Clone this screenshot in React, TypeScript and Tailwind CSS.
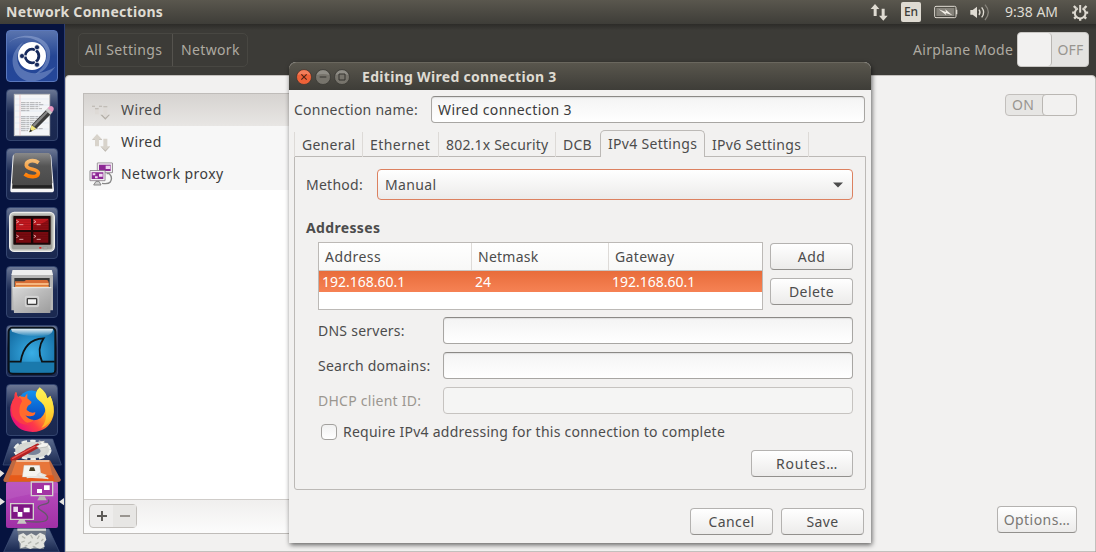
import type { ReactNode } from "react";

function Tile({ children, blue = false }: { children: ReactNode; blue?: boolean }) {
  return (
    <div
      className={`relative h-[52px] w-[52px] overflow-hidden rounded-[4px] border ${
        blue ? "border-[#5a78bd] bg-linear-to-b from-[#5a74ae] via-[#254694] to-[#25479a]" : "border-[#34456f] bg-linear-to-b from-[#6b7794] via-[#1d2b55] via-45% to-[#1a2850]"
      }`}
    >
      <svg viewBox="3 3 150 150" className="h-full w-full">
        {children}
      </svg>
    </div>
  );
}

function DashIcon() {
  return (
    <>
      <path d="M8 38 C40 5 120 10 132 62 C136 100 120 125 88 132 C120 110 128 80 118 58 C100 20 40 12 8 38Z" fill="#b9c9ea" opacity=".38" />
      <path d="M60 152 C25 140 12 100 24 70 C30 58 38 45 52 36 C30 65 28 96 45 115 C75 140 115 130 148 110 C120 150 90 158 60 152Z" fill="#b9c9ea" opacity=".34" />
      <circle cx="78" cy="78" r="42" fill="#fff" />
      <circle cx="78" cy="78" r="20.5" fill="none" stroke="#15295c" strokeWidth="8.5" strokeDasharray="39.4 3.5" strokeDashoffset="-23" />
      <circle cx="48" cy="78" r="7.5" fill="#15295c" stroke="#fff" strokeWidth="2" />
      <circle cx="93" cy="52" r="7.5" fill="#15295c" stroke="#fff" strokeWidth="2" />
      <circle cx="93" cy="104" r="7.5" fill="#15295c" stroke="#fff" strokeWidth="2" />
    </>
  );
}

function EditorIcon() {
  return (
    <>
      <rect x="25" y="16" width="106" height="124" fill="#f4f5f7" stroke="#c3c3c3" strokeWidth="3" />
      <path d="M42 17V139" stroke="#eca6a6" strokeWidth="1.5" />
      <path d="M27 30H130M27 48H130M27 66H130M27 84H130M27 102H130M27 120H130" stroke="#ccdcf0" strokeWidth="1.2" />
      <path d="M45 41H104M45 47H112M45 53H100M45 59H108M45 65H70M45 83H106M45 89H98M45 95H90M45 101H82M45 107H76M45 113H70M45 119H110M45 125H66" stroke="#8f9092" strokeWidth="2" strokeDasharray="14 2 9 2" />
      <path d="M70 130L77 108L121 62L135 75L91 119Z" fill="#3b3b3b" />
      <path d="M80 108L122 65L127 69L85 113Z" fill="#868686" />
      <path d="M70 130L77 108L91 119Z" fill="#f1e57c" />
      <path d="M70 130L73 121L79 126Z" fill="#222" />
      <path d="M119 64L126 56L140 69L133 77Z" fill="#c9cac8" />
      <path d="M125 57Q134 46 142 55Q146 62 138 70Z" fill="#e797c0" />
    </>
  );
}

function SublimeIcon() {
  return (
    <>
      <defs>
        <linearGradient id="keytop" x1="0" y1="0" x2="0" y2="1">
          <stop offset="0" stopColor="#8a8a8a" />
          <stop offset=".4" stopColor="#555" />
          <stop offset="1" stopColor="#4a4a4a" />
        </linearGradient>
        <linearGradient id="orange" x1="0" y1="0" x2="0" y2="1">
          <stop offset="0" stopColor="#f4bd76" />
          <stop offset="1" stopColor="#ff7b00" />
        </linearGradient>
      </defs>
      <path d="M20 26Q21 18 30 17H126Q135 18 136 26L144 126Q144 133 136 133H20Q12 133 13 126Z" fill="#f6f6f6" />
      <path d="M27 25H130L139 122H18Z" fill="#3a3a3a" />
      <path d="M29 15H127Q133 16 134 23L139 103Q139 111 132 112H25Q18 111 18 103L23 22Q24 16 29 15Z" fill="url(#keytop)" />
      <path d="M20 112H138L137 119H21Z" fill="#222" />
      <path d="M98 44C82 33 60 38 61 52C62 66 96 62 97 75C97 90 68 88 56 78" fill="none" stroke="url(#orange)" strokeWidth="11" />
    </>
  );
}

function TerminatorIcon() {
  return (
    <>
      <rect x="11" y="16" width="134" height="117" rx="14" fill="#c7c8c2" stroke="#eeeeeb" strokeWidth="4" />
      <rect x="17" y="23" width="122" height="104" rx="8" fill="#9fa09a" />
      <rect x="22" y="27" width="112" height="86" rx="2" fill="#1b0808" />
      <path d="M30 35H75V69H30ZM82 35H127V69H82Z" fill="#c51a20" />
      <path d="M30 75H75V107H30ZM82 75H127V107H82Z" fill="#780b10" />
      <path d="M82 69V55Q108 52 127 38V69Z" fill="#8e0e14" />
      <path d="M30 42H75M30 49H75M30 56H75M30 63H75M82 42H127M82 49H127M82 56H127M82 63H127M30 82H75M30 89H75M30 96H75M82 82H127M82 89H127M82 96H127" stroke="#480409" strokeWidth="1" opacity=".7" />
      <path d="M31 40L38 44L31 48M40 53H52M83 40L90 44L83 48M92 53H104M31 84L38 88L31 92M40 97H52M83 84L90 88L83 92M92 97H104" fill="none" stroke="#f1b9b9" strokeWidth="2.5" />
      <rect x="100" y="120" width="6" height="5" fill="#e02020" />
      <rect x="111" y="119" width="14" height="7" rx="2" fill="#a6a7a2" stroke="#85867f" />
    </>
  );
}

function FilesIcon() {
  return (
    <>
      <defs>
        <linearGradient id="drawer" x1="0" y1="0" x2="1" y2="1">
          <stop offset="0" stopColor="#d9d9d9" />
          <stop offset=".5" stopColor="#b9b9b9" />
          <stop offset="1" stopColor="#9c9c9c" />
        </linearGradient>
      </defs>
      <path d="M20 12H138L141 32V133H16V32Z" fill="#b6b6b6" />
      <path d="M20 12H137L141 27H16Z" fill="#eeeeee" />
      <path d="M25 36H131V66H25Z" fill="#383838" />
      <path d="M27 46H55L60 42H124L128 48V68H27Z" fill="#d86d35" />
      <path d="M30 54H128" stroke="#ffd09a" strokeWidth="5" />
      <path d="M28 59H128V67H28Z" fill="#eb9a52" />
      <path d="M20 64H136L133 141H24Z" fill="url(#drawer)" />
      <path d="M20 65H136" stroke="#ededed" strokeWidth="3" />
      <rect x="58" y="91" width="40" height="31" rx="4" fill="#cbcbcb" stroke="#e0e0e0" strokeWidth="2" />
      <rect x="64" y="98" width="28" height="17" rx="2" fill="#f3f3f3" stroke="#3e3e3e" strokeWidth="4" />
    </>
  );
}

function WiresharkIcon() {
  return (
    <>
      <defs>
        <radialGradient id="sea" cx=".5" cy=".55" r=".6">
          <stop offset="0" stopColor="#39aee6" />
          <stop offset="1" stopColor="#1670a7" />
        </radialGradient>
        <linearGradient id="gloss" x1="0" y1="0" x2="0" y2="1">
          <stop offset="0" stopColor="#fff" stopOpacity=".9" />
          <stop offset="1" stopColor="#fff" stopOpacity="0" />
        </linearGradient>
      </defs>
      <rect x="8" y="8" width="140" height="138" rx="12" fill="url(#sea)" stroke="#0a1119" strokeWidth="6" />
      <path d="M12 110H144V142H12Z" fill="#1a79ac" />
      <path d="M15 11H141Q141 28 120 32Q70 40 18 20Z" fill="url(#gloss)" />
      <path d="M10 110H44C50 70 70 42 113 40C98 62 98 88 108 110H146" fill="none" stroke="#0c1216" strokeWidth="5.5" />
    </>
  );
}

function FirefoxIcon() {
  return (
    <>
      <defs>
        <linearGradient id="fire" x1="1" y1=".1" x2=".1" y2=".8">
          <stop offset="0" stopColor="#fff44f" />
          <stop offset=".4" stopColor="#ffa41f" />
          <stop offset=".7" stopColor="#ff3b47" />
          <stop offset="1" stopColor="#e9107a" />
        </linearGradient>
        <linearGradient id="globe" x1="0" y1="0" x2="0" y2="1">
          <stop offset="0" stopColor="#1191ef" />
          <stop offset="1" stopColor="#0646bd" />
        </linearGradient>
        <linearGradient id="flame" x1="0" y1="0" x2="0" y2="1">
          <stop offset="0" stopColor="#fff25a" />
          <stop offset=".5" stopColor="#ffdd38" />
          <stop offset="1" stopColor="#ffad22" />
        </linearGradient>
      </defs>
      <path d="M30 23L35 40Q48 30 80 32L120 50L133 35Q148 70 142 96Q128 143 80 144Q28 143 14 94Q8 64 26 40Q24 29 30 23Z" fill="url(#fire)" />
      <path d="M44 35Q60 18 82 20Q98 22 108 35L118 62Q122 86 104 102Q86 114 66 105L48 80Z" fill="url(#globe)" />
      <path d="M30 23L35 40Q48 36 56 39L64 28V43L77 54Q76 61 66 65Q61 72 62 78Q76 90 88 84Q88 96 76 96Q66 98 58 94Q66 106 84 108Q70 122 46 112L20 72Q20 55 30 38Z" fill="#ff6a2c" />
      <path d="M30 23L35 40Q46 40 48 52Q36 72 42 94Q54 114 70 122Q38 124 20 96Q10 66 26 40Q24 29 30 23Z" fill="#fb3a47" />
      <path d="M101 10Q121 25 124 43L133 36Q146 60 141 94Q130 124 106 132Q124 110 119 80Q114 58 100 50Q86 40 90 27Q93 17 101 10Z" fill="url(#flame)" />
    </>
  );
}

function FoldedIcons() {
  return (
    <svg viewBox="0 189 195 342" className="block h-[114px] w-[65px]">
      <defs>
        <linearGradient id="purple" x1="0" y1="0" x2="0" y2="1">
          <stop offset="0" stopColor="#b94fc0" />
          <stop offset="1" stopColor="#a030a5" />
        </linearGradient>
        <linearGradient id="fold" x1="0" y1="0" x2="0" y2="1">
          <stop offset="0" stopColor="#5b6b8e" />
          <stop offset="1" stopColor="#17264f" />
        </linearGradient>
      </defs>
      <path d="M34 192H158L184 270H9Z" fill="url(#fold)" stroke="#44557b" strokeWidth="2" />
      <ellipse cx="97" cy="225" rx="51" ry="24" fill="#d9dad6" stroke="#eceeea" strokeWidth="13" strokeDasharray="16 9" />
      <ellipse cx="97" cy="225" rx="46" ry="20" fill="none" stroke="#d5d7d3" strokeWidth="9" />
      <ellipse cx="98" cy="228" rx="24" ry="12" fill="#788399" />
      <path d="M38 253L112 213" stroke="#b32121" strokeWidth="14" strokeLinecap="round" />
      <path d="M38 250L105 214" stroke="#e65450" strokeWidth="4" strokeLinecap="round" />
      <path d="M108 214L124 206L117 200L134 197L131 203L144 204Q148 214 136 216L117 219Z" fill="#f4f4f0" stroke="#777" strokeWidth="1" />
      <path d="M37 256H150L183 315Q181 321 174 321H18Q10 321 10 314Z" fill="#bd6942" />
      <path d="M49 256H146L160 312H29Z" fill="#e8763a" />
      <path d="M49 258H148" stroke="#f6d4b7" strokeWidth="5" />
      <path d="M31 301H160L164 319H25Z" fill="#e65a19" />
      <path d="M72 271H119L124 306H67Z" fill="#f5f4ef" stroke="#bbb" />
      <path d="M87 288L91 277H102L106 288Z" fill="#484125" />
      <path d="M119 294L137 301L130 307L112 300ZM125 303L145 311M80 308Q116 302 145 311" fill="#eee" stroke="#e3e2dd" strokeWidth="4" />
      <rect x="18" y="321" width="156" height="138" rx="6" fill="url(#purple)" />
      <path d="M18 321H174V354Q100 350 18 375Z" fill="#c16ac7" opacity=".35" />
      <path d="M94 321H158V362H94Z" fill="#a334a4" stroke="#d3d2cd" strokeWidth="4" />
      <path d="M132 331H149V345H132ZM111 342H126V354H111Z" fill="#fff" />
      <path d="M118 364H134L140 376H112Z" fill="#b8b6b1" />
      <path d="M32 386H100V433H32Z" fill="#7f1584" stroke="#d3d2cd" strokeWidth="4" />
      <path d="M71 398H89V412H71ZM53 411H67V425H53Z" fill="#fff" />
      <path d="M40 395H54V411H40Z" fill="#ead8eb" />
      <path d="M57 435H74L80 446H51Z" fill="#c8c6c2" />
      <path d="M145 374Q151 386 131 388Q102 395 124 407Q151 423 139 436Q128 444 77 439" fill="none" stroke="#66576b" strokeWidth="4" />
      <path d="M42 462H147L178 531H11Z" fill="url(#fold)" stroke="#44557b" strokeWidth="2" />
      <path d="M52 463H139L132 522H59Z" fill="#6d7684" />
      <path d="M52 464H138" stroke="#d3d5d1" strokeWidth="7" />
      <path d="M56 480L70 474L80 482L94 475L108 482L120 473L135 480L139 494L131 505L134 515L120 521L104 517L91 522L76 516L61 520L62 506L54 495Z" fill="#e3e4df" />
      <path d="M66 484L76 490M92 480L98 490M118 482L112 492M64 502L74 498M84 506L94 500M106 508L116 502M124 498L130 492M74 514L82 511M98 514L106 516" fill="none" stroke="#b4b7b0" strokeWidth="4" />
      <path d="M0 285L13 295L0 307ZM0 369L15 380L0 391ZM192 369L177 380L192 391Z" fill="#e4e2df" />
    </svg>
  );
}

function Launcher() {
  return (
    <nav className="flex w-[65px] shrink-0 flex-col border-r border-[#2b3d72] bg-[#06133f]">
      <div className="flex flex-col gap-[7px] pt-[6px] pb-[2px] pl-[6px]">
        <Tile blue><DashIcon /></Tile>
        <Tile><EditorIcon /></Tile>
        <Tile><SublimeIcon /></Tile>
        <Tile><TerminatorIcon /></Tile>
        <Tile><FilesIcon /></Tile>
        <Tile><WiresharkIcon /></Tile>
        <Tile><FirefoxIcon /></Tile>
      </div>
      <FoldedIcons />
    </nav>
  );
}

function TopBar() {
  return (
    <header className="flex h-6 shrink-0 items-center bg-linear-to-b from-[#5a574e] to-[#3e3d38] text-[#dfdbd2]">
      <h1 className="pl-[6px] text-[14px] font-bold tracking-[0.28px]">Network Connections</h1>
      <svg viewBox="60 0 54 72" className="ml-auto h-6 w-[18px]" fill="#dfdbd2">
        <path d="M75 12L88 27H80V48H71V27H62ZM100 62L87 47H95V26H104V47H113Z" />
      </svg>
      <div className="ml-[13px] flex h-5 w-5 items-center justify-center rounded-[2px] bg-[#dfdbd2] text-[12px] font-medium tracking-[-0.2px] text-[#3c3b37]">En</div>
      <svg viewBox="252 0 72 72" className="ml-[13px] h-6 w-6">
        <rect x="254" y="19" width="64" height="34" rx="4" fill="none" stroke="#dfdbd2" strokeWidth="3" />
        <rect x="259" y="24" width="54" height="24" fill="#85827a" />
        <path d="M320 29V43" stroke="#dfdbd2" strokeWidth="4" />
        <path d="M266 28L288 36L286 28L307 46L287 39L289 46Z" fill="#f2eee6" />
      </svg>
      <svg viewBox="359 0 60 72" className="ml-3 h-6 w-5" fill="none" stroke="#dfdbd2" strokeWidth="4">
        <path d="M360 30H367L380 20V54L367 44H360Z" fill="#dfdbd2" stroke="none" />
        <path d="M386 29Q392 37 386 45" />
        <path d="M394 22Q406 37 394 52" />
        <path d="M404 14Q424 37 404 60" stroke="#85827a" />
      </svg>
      <time className="ml-[15px] w-[54px] text-[14px] tracking-[0px] whitespace-nowrap">9:38 AM</time>
      <svg viewBox="666 0 50 72" className="mr-[7px] ml-[13px] h-6 w-[17px]" fill="none" stroke="#dfdbd2">
        <path d="M683 25A16 16 0 1 0 697 25" strokeWidth="6" />
        <path d="M690 15V38" strokeWidth="6" />
        <path d="M671 18L678 25M709 18L702 25M666 38H674M706 38H714M672 56L678 50M708 56L702 50M690 54V62" strokeWidth="7" />
      </svg>
    </header>
  );
}

function WiredIcon({ partial = false }: { partial?: boolean }) {
  return (
    <svg viewBox="0 0 54 57" className="h-[19px] w-[18px]" fill="#d8d3cb">
      {partial ? (
        <>
          <path d="M9 22H20V40H9ZM34 20H46V42H34Z" fill="#dedad6" />
          <path d="M0 14H9V17H0ZM21 14H30V17H21ZM9 22H20V25H9ZM34 16H46V19H34Z" fill="#b9b4ad" />
          <path d="M25 41H31L40 50L49 41H54L40 56Z" fill="#b5b0a9" />
          <path d="M32 41H48L40 49Z" fill="#dedad6" />
        </>
      ) : (
        <>
          <path d="M15 3L30 19H21V40H9V19H1Z" />
          <path d="M40 56L25 40H34V17H46V40H55Z" />
          <path d="M1 19H9V21H1ZM21 19H30V21H21ZM25 40L40 56L54 40L40 52Z" fill="#bfbab3" />
        </>
      )}
    </svg>
  );
}

function ProxyIcon() {
  return (
    <svg viewBox="0 0 72 72" className="h-6 w-6">
      <path d="M25 3H70V32H25Z" fill="#8d2795" stroke="#8c8c8c" strokeWidth="3" />
      <path d="M28 6H67V29H28Z" fill="none" stroke="#ededed" strokeWidth="4" />
      <path d="M50 11H64V21H50Z" fill="#ecd0ee" />
      <path d="M53 35H61Q72 46 64 60Q58 67 39 64" fill="none" stroke="#888" strokeWidth="4" />
      <path d="M3 26H48V56H3Z" fill="#8d2795" stroke="#8c8c8c" strokeWidth="3" />
      <path d="M6 29H45V53H6Z" fill="none" stroke="#ededed" strokeWidth="4" />
      <path d="M11 34H19V40H11ZM30 35H41V44H30ZM18 43H26V49H18Z" fill="#f0d9f1" />
      <path d="M21 58H30L36 69H14Z" fill="#d0d0d0" stroke="#858585" strokeWidth="3" />
    </svg>
  );
}

function Button({ children, className }: { children: ReactNode; className: string }) {
  return (
    <button
      className={`flex h-[27px] shrink-0 items-center justify-center rounded-[4px] border border-[#b4b2b0] border-b-[#92908d] bg-linear-to-b from-white to-[#ecebea] whitespace-nowrap ${className}`}
    >
      {children}
    </button>
  );
}

function Entry({ value, className, disabled = false }: { value?: string; className: string; disabled?: boolean }) {
  return (
    <div
      className={`flex h-[27px] shrink-0 items-center rounded-[4px] border pl-[6px] ${
        disabled
          ? "border-[#c6c3c0] bg-[#f5f5f4]"
          : "border-[#a8a6a3] border-t-[#8b8986] bg-linear-to-b from-[#f4f4f4] to-white shadow-[inset_0_1px_1px_rgba(0,0,0,0.08)]"
      } ${className}`}
    >
      {value}
    </div>
  );
}

function SettingsWindow() {
  return (
    <main className="flex min-w-0 flex-1 flex-col bg-[#3c3b37]">
      <div className="flex h-[51px] shrink-0 items-center bg-linear-to-b from-[#2c2b28] to-[#3c3b37] to-12% text-[#aeaaa1]">
        <div className="ml-[13px] flex h-[34px] rounded-[5px] border border-[#484742]">
          <span className="flex w-[94px] items-center border-r border-[#55534e] pl-[6px] tracking-[0.35px] whitespace-nowrap">All Settings</span>
          <span className="flex w-[74px] items-center pl-2 tracking-[0.35px]">Network</span>
        </div>
        <span className="ml-auto w-[104px] tracking-[0.3px] whitespace-nowrap">Airplane Mode</span>
        <div className="mr-[7px] flex h-[35px] w-[72px] rounded-[4px] border border-[#c9c7c4] bg-[#e4e3e1]">
          <span className="w-[34px] rounded-[4px] border-r border-[#b9b6b2] bg-[#f2f1f0]" />
          <span className="flex flex-1 items-center justify-center pl-px text-[#98958f]">OFF</span>
        </div>
      </div>
      <div className="flex min-h-0 flex-1 rounded-t-[4px] border border-[#c3c0bd] bg-[#f2f1f0] pt-[17px] pr-[18px] pb-[17px] pl-[17px]">
        <section className="flex w-[220px] flex-col border border-[#bfbcb9] bg-white text-[#3c3c3c]">
          <div className="flex h-8 shrink-0 items-center bg-linear-to-b from-[#d6d3d0] to-[#e8e6e4] pl-2 text-[#4c4c4c]">
            <WiredIcon partial />
            <span className="ml-[11px] tracking-[0.4px]">Wired</span>
          </div>
          <div className="flex h-8 shrink-0 items-center bg-[#f7f7f7] pl-2">
            <WiredIcon />
            <span className="ml-[11px] tracking-[0.4px]">Wired</span>
          </div>
          <div className="flex h-8 shrink-0 items-center bg-[#f7f7f7] pl-[5px]">
            <ProxyIcon />
            <span className="ml-2 tracking-[0.45px]">Network proxy</span>
          </div>
          <div className="mt-auto flex h-[34px] items-start border-t border-[#cfccc9] bg-linear-to-b from-[#f0efee] to-[#fcfcfc] pt-1 pl-[5px]">
            <div className="flex h-6 w-12 rounded-[4px] border border-[#c3c0bc] bg-[#eeedec]">
              <span className="flex w-[23px] items-center justify-center">
                <svg viewBox="0 0 10 10" className="h-[10px] w-[10px]"><path d="M4 0H6V4H10V6H6V10H4V6H0V4H4Z" fill="#5e5c59" /></svg>
              </span>
              <span className="flex flex-1 items-center justify-center bg-[#e7e6e4]">
                <svg viewBox="0 0 10 10" className="h-[10px] w-[10px]"><path d="M0 4H10V6H0Z" fill="#999590" /></svg>
              </span>
            </div>
          </div>
        </section>
        <section className="flex flex-1 flex-col items-end justify-between pt-px pb-px">
          <div className="flex h-[22px] w-[72px] rounded-[4px] border border-[#c2bfbc] bg-[#e7e6e4]">
            <span className="flex flex-1 items-center justify-center pr-[2px] text-[#999590]">ON</span>
            <span className="-my-px -mr-px w-[35px] rounded-[4px] border border-[#bab7b3] bg-[#f2f1f0]" />
          </div>
          <Button className="w-[80px] tracking-[0.45px] text-[#797774]">Options…</Button>
        </section>
      </div>
    </main>
  );
}

function WindowControl({ kind }: { kind: "close" | "minimize" | "maximize" }) {
  return (
    <svg viewBox="0 0 48 48" className="h-4 w-4">
      <circle cx="24" cy="24" r="22.5" fill={kind === "close" ? "#ee6238" : "#77746c"} stroke="#34332f" strokeWidth="2" />
      <path d="M5 18Q9 4 24 4Q39 4 43 18Q24 12 5 18Z" fill="#fff" opacity=".18" />
      {kind === "close" && <path d="M16 16L32 32M32 16L16 32" stroke="#4e2417" strokeWidth="3.5" />}
      {kind === "minimize" && <path d="M14 24H34" stroke="#34332f" strokeWidth="3" />}
      {kind === "maximize" && <path d="M15 15H33V33H15Z" fill="none" stroke="#34332f" strokeWidth="3" />}
    </svg>
  );
}

function Tab({ label, className }: { label: string; className: string }) {
  return <div className={`flex h-[25px] items-center border-r border-[#dddad7] pl-[7px] whitespace-nowrap ${className}`}>{label}</div>;
}

function AddressTable() {
  return (
    <div className="h-[68px] w-[445px] shrink-0 border border-[#bcb9b6] bg-white">
      <div className="flex h-7 border-b border-[#c9c6c3] bg-linear-to-b from-white to-[#f8f8f7]">
        <span className="flex w-[153px] items-center border-r border-[#dedbd8] pl-[6px] tracking-[0.45px]">Address</span>
        <span className="flex w-[137px] items-center border-r border-[#dedbd8] pl-[6px]">Netmask</span>
        <span className="flex flex-1 items-center pl-[6px] tracking-[0.4px]">Gateway</span>
      </div>
      <div className="flex h-[21px] items-center bg-linear-to-b from-[#e86c3a] to-[#f68254] tracking-[0px] text-white">
        <span className="w-[153px] pl-[3px]">192.168.60.1</span>
        <span className="w-[137px] pl-[3px]">24</span>
        <span className="pl-[3px]">192.168.60.1</span>
      </div>
    </div>
  );
}

function EditDialog() {
  return (
    <div role="dialog" className="absolute top-[62px] left-[289px] flex h-[481px] w-[582px] flex-col rounded-t-[7px] bg-[#f2f1f0] text-[#4c4c4c] shadow-[1px_2px_5px_rgba(0,0,0,0.6)]">
      <div className="flex h-7 shrink-0 items-center gap-[3px] rounded-t-[7px] border-t border-[#6a675e] bg-linear-to-b from-[#59564d] to-[#3e3d38] pl-[7px] text-[#dfdbd2]">
        <WindowControl kind="close" />
        <WindowControl kind="minimize" />
        <WindowControl kind="maximize" />
        <h2 className="ml-[9px] text-[14px] font-bold tracking-[0.3px]">Editing Wired connection 3</h2>
      </div>
      <div className="flex items-center pt-[6px] pl-[5px]">
        <label className="w-[137px] shrink-0">Connection name:</label>
        <Entry className="w-[434px] tracking-[0.4px] text-[#3c3c3c]" value="Wired connection 3" />
      </div>
      <div className="z-10 mt-[7px] -mb-px ml-[5px] flex h-[27px] shrink-0 items-start">
        <Tab className="mt-[2px] w-[69px] border-l" label="General" />
        <Tab className="mt-[2px] w-[76px] tracking-[0.45px]" label="Ethernet" />
        <Tab className="mt-[2px] w-[117px] tracking-[0.2px]" label="802.1x Security" />
        <Tab className="mt-[2px] w-[44px] border-r-0" label="DCB" />
        <div className="flex h-[27px] w-[105px] items-center rounded-t-[5px] border border-b-0 border-[#bcb9b6] bg-[#f2f1f0] pl-[7px] tracking-[0.3px] whitespace-nowrap">IPv4 Settings</div>
        <Tab className="mt-[2px] w-[104px] tracking-[0.3px]" label="IPv6 Settings" />
      </div>
      <div className="ml-[5px] h-[334px] w-[572px] shrink-0 rounded-b-[3px] border border-[#bcb9b6]">
        <div className="mt-3 flex items-center pl-[11px]">
          <label className="w-[71px]">Method:</label>
          <div className="flex h-[31px] w-[476px] items-center justify-between rounded-[4px] border border-[#dc8160] bg-linear-to-b from-white to-[#ecebea] pr-[9px] pl-[7px] tracking-[0.35px]">
            Manual
            <svg viewBox="0 0 10 6" className="h-[6px] w-[10px]"><path d="M0 0.5H10L5 5.5Z" fill="#4c4c4c" /></svg>
          </div>
        </div>
        <h3 className="mt-[18px] flex h-5 items-center pl-[11px] text-[14px] font-bold tracking-[0.35px]">Addresses</h3>
        <div className="mt-1 flex pl-[23px]">
          <AddressTable />
          <div className="ml-[7px] flex flex-col gap-2 pt-px">
            <Button className="w-[83px] tracking-[0.4px]">Add</Button>
            <Button className="w-[83px] tracking-[0.4px]">Delete</Button>
          </div>
        </div>
        <div className="mt-[7px] flex flex-col gap-2 pl-[23px]">
          <div className="flex items-center">
            <label className="w-[125px] whitespace-nowrap">DNS servers:</label>
            <Entry className="w-[410px]" />
          </div>
          <div className="flex items-center">
            <label className="w-[125px] whitespace-nowrap">Search domains:</label>
            <Entry className="w-[410px]" />
          </div>
          <div className="flex items-center">
            <label className="w-[125px] whitespace-nowrap text-[#9b9790]">DHCP client ID:</label>
            <Entry className="w-[410px]" disabled />
          </div>
        </div>
        <div className="mt-[10px] flex h-4 items-center pl-[26px]">
          <span className="h-4 w-4 rounded-[4px] border border-[#a3a19e] bg-linear-to-b from-[#f1f1f1] to-white" />
          <span className="ml-[6px] whitespace-nowrap">Require IPv4 addressing for this connection to complete</span>
        </div>
        <div className="mt-[10px] ml-[456px]">
          <Button className="w-[102px] pl-[10px] tracking-[0.8px]">Routes…</Button>
        </div>
      </div>
      <div className="mt-[18px] flex justify-end gap-2 pr-[7px]">
        <Button className="w-[83px] tracking-[0.4px]">Cancel</Button>
        <Button className="w-[83px] tracking-[0.4px]">Save</Button>
      </div>
    </div>
  );
}

export default function App() {
  return (
    <div className="relative flex h-[552px] w-[1096px] flex-col overflow-hidden bg-[#3c3b37] font-['Noto_Sans','Open_Sans',sans-serif] text-[14px] leading-5 tracking-[0.25px]">
      <TopBar />
      <div className="flex min-h-0 flex-1">
        <Launcher />
        <SettingsWindow />
      </div>
      <EditDialog />
    </div>
  );
}
